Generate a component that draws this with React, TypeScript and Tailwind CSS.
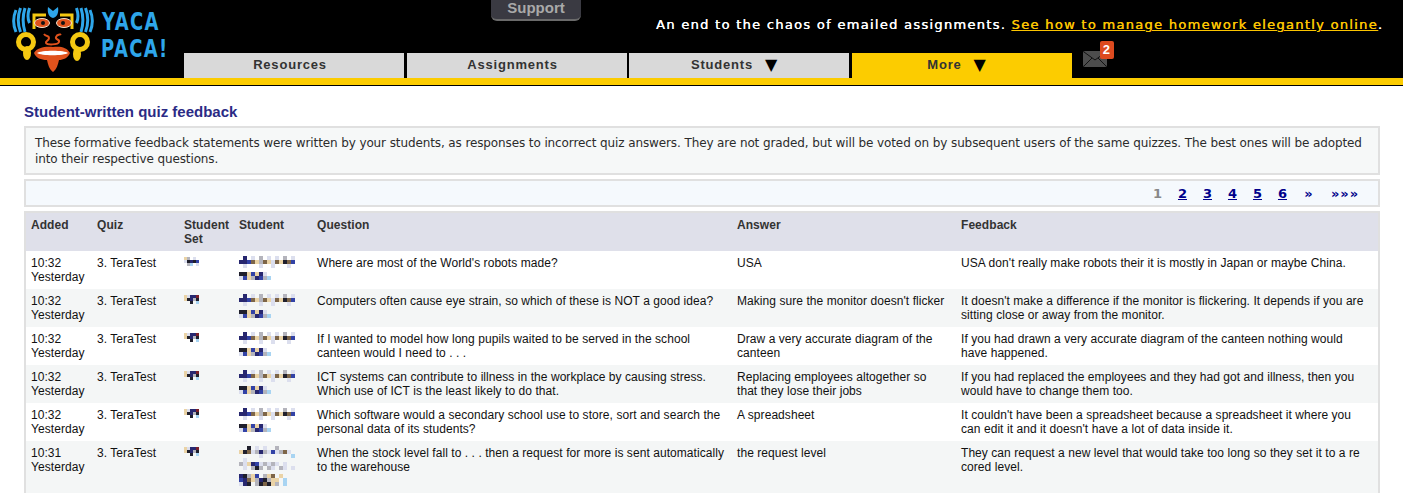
import React from 'react';

const COLORS: Record<string, string> = {
  n: '#27276f',
  d: '#1f1f2c',
  b: '#3242a6',
  t: '#ead3a6',
  g: '#b4b4bc',
  l: '#dcdfee',
  s: '#a8d4f2',
  w: '#7d6548',
  r: '#7a1f2a',
};

const SET_A = ['tg.l.', 'ldndb', '.gs.l'];
const SET_B = ['tlnnr', 'tdngd', '..d.s'];

const NAME_A = [
  '.n.l.g.l.l.g.l',
  'nnbwtgwtlwtdwb',
  '.l...l..l...l.',
  '..............',
  'ddtbtnl.......',
  'lbtgnbgs......',
];
const NAME_B = [
  '..d.l.l..g....',
  'tdwlgnglblgwl.',
  '.....l.......s',
  '.l............',
  'gltnblglgl.l..',
  '.l.gdg.gl.gl.l',
  '..............',
  'ndgtb.gtw.t...',
  'bnwtgndgtt.s..',
  'lnd.gdwdtg.s..',
];

const ROWS = [
  {
    time: '10:32',
    set: SET_A,
    name: NAME_A,
    question: "Where are most of the World's robots made?",
    answer: 'USA',
    feedback: "USA don't really make robots their it is mostly in Japan or maybe China.",
  },
  {
    time: '10:32',
    set: SET_B,
    name: NAME_A,
    question: 'Computers often cause eye strain, so which of these is NOT a good idea?',
    answer: "Making sure the monitor doesn't flicker",
    feedback: "It doesn't make a difference if the monitor is flickering. It depends if you are sitting close or away from the monitor.",
  },
  {
    time: '10:32',
    set: SET_B,
    name: NAME_A,
    question: 'If I wanted to model how long pupils waited to be served in the school canteen would I need to . . .',
    answer: 'Draw a very accurate diagram of the canteen',
    feedback: 'If you had drawn a very accurate diagram of the canteen nothing would have happened.',
  },
  {
    time: '10:32',
    set: SET_B,
    name: NAME_A,
    question: 'ICT systems can contribute to illness in the workplace by causing stress. Which use of ICT is the least likely to do that.',
    answer: 'Replacing employees altogether so that they lose their jobs',
    feedback: 'If you had replaced the employees and they had got and illness, then you would have to change them too.',
  },
  {
    time: '10:32',
    set: SET_B,
    name: NAME_A,
    question: 'Which software would a secondary school use to store, sort and search the personal data of its students?',
    answer: 'A spreadsheet',
    feedback: "It couldn't have been a spreadsheet because a spreadsheet it where you can edit it and it doesn't have a lot of data inside it.",
  },
  {
    time: '10:31',
    set: SET_B,
    name: NAME_B,
    question: 'When the stock level fall to . . . then a request for more is sent automatically to the warehouse',
    answer: 'the request level',
    feedback: 'They can request a new level that would take too long so they set it to a re cored level.',
  },
];

const TABS = [
  { label: 'Resources' },
  { label: 'Assignments' },
  { label: 'Students', arrow: true },
  { label: 'More', arrow: true, active: true },
];

// blurred names in the screenshot, drawn as blocks
const Mosaic = ({ rows, cell = 4 }: { rows: string[]; cell?: number }) => (
  <svg width={rows[0].length * cell} height={rows.length * cell} className="block" shapeRendering="crispEdges">
    {rows.map((row, y) =>
      row.split('').map((c, x) =>
        COLORS[c] ? <rect key={`${x}-${y}`} x={x * cell} y={y * cell} width={cell} height={cell} fill={COLORS[c]} /> : null
      )
    )}
  </svg>
);

const Logo = () => (
  <svg width="184" height="78" viewBox="0 0 184 78" className="block">
    <g fill="none" stroke="#2ea6ea" strokeWidth="3">
      <path d="M16 10c-3 7-3 15 0 22M20.500 8c-3 8-3 16 0 24M25 8c-2.500 8-2.500 16 0 24M29.500 8c-2 6-2 11 0 15" />
      <path d="M90 10c3 7 3 15 0 22M85.500 8c3 8 3 16 0 24M81 8c2.500 8 2.500 16 0 24M76.500 8c2 6 2 11 0 15" />
    </g>
    <path d="M48 7l5 4 5-4c1 6-1 10-5 11-4-1-6-5-5-11z" fill="#2ea6ea" />
    <g fill="none" stroke="#f5c911" strokeWidth="3">
      <path d="M34 29v-14h12M72 29v-14h-12" />
      <circle cx="26" cy="42" r="7.5" strokeWidth="5" />
      <circle cx="80" cy="42" r="7.5" strokeWidth="5" />
    </g>
    <ellipse cx="27" cy="53" rx="4" ry="7" fill="#f5c911" />
    <ellipse cx="77" cy="54" rx="4" ry="7" fill="#f5c911" />
    <ellipse cx="42" cy="23" rx="7.5" ry="4.5" fill="#e0521c" stroke="#f3e5d0" strokeWidth="1" />
    <ellipse cx="64" cy="23" rx="7.5" ry="4.5" fill="#e0521c" stroke="#f3e5d0" strokeWidth="1" />
    <circle cx="43" cy="23" r="2" fill="#111" />
    <circle cx="63" cy="23" r="2" fill="#111" />
    <path d="M44 34c2 3 5 1 5 4s-4 3-3 5 12 2 13-1-4-2-3-5 4-2 5-3" fill="none" stroke="#e0521c" strokeWidth="2" />
    <path d="M34 53c3-6 13-7 19-6 7-1 14 0 17 6-2 5-7 7-11 7-1 4-2 9-6 12-4-3-5-8-6-12-6 0-11-2-13-7z" fill="#e0521c" />
    <path d="M37 53c4-3 28-3 31 0-4 3-27 3-31 0z" fill="#fff" />
    <g fill="#2ea6ea" fontFamily="'DejaVu Sans', sans-serif" fontWeight="700" fontSize="20" letterSpacing="1.5">
      <text transform="translate(102 30) scale(0.9 1.25)">YACA</text>
      <text transform="translate(101 57) scale(0.9 1.25)">PACA!</text>
    </g>
  </svg>
);

const MailBadge = () => (
  <div className="relative ml-[8.5px] mt-[-2px] h-[25px] w-[30px]">
    <svg width="24" height="16" viewBox="0 0 24 16" className="absolute left-0 top-[0px]">
      <rect width="24" height="16" rx="2" fill="#4d4d4d" />
      <path d="M1 1l11 8 11-8M1 15l8-8M23 15l-8-8" fill="none" stroke="#111" strokeWidth="1" />
    </svg>
    <div className="absolute left-[17px] top-[-10px] flex h-[18px] w-[14px] items-center justify-center rounded-[2px] bg-[#dc4a1f] font-['Liberation_Sans',sans-serif] text-[13px] font-bold text-white">
      2
    </div>
  </div>
);

const App = () => {
  return (
    <div className="h-[494px] w-[1403px] overflow-hidden bg-white font-['Liberation_Sans',sans-serif] text-[12px] leading-[14px] tracking-[0.06px] text-[#111]">
      <header className="border-b border-black">
        <div className="flex h-[78px] bg-black">
          <div className="w-[184px]">
            <Logo />
          </div>
          <div className="flex flex-1 flex-col">
            <div className="flex h-[53px] items-start">
              <div className="ml-[307px] flex h-[21px] w-[90px] items-center justify-center rounded-b-[6px] border-b-2 border-[#6a6a6a] bg-[#3a3a42] pb-[3px] text-[15px] font-bold tracking-normal text-[#a9a9a9]">
                Support
              </div>
              <p className="ml-[75px] mt-[17px] whitespace-nowrap font-['DejaVu_Sans',sans-serif] text-[13px] leading-[16px] tracking-[1.3px] text-white [text-shadow:0.35px_0_0_currentColor]">
                An end to the chaos of emailed assignments.{' '}
                <a className="text-[#fcc500] underline">See how to manage homework elegantly online</a>.
              </p>
            </div>
            <nav className="flex h-[25px] gap-[2.5px]">
              {TABS.map((tab) => (
                <div
                  key={tab.label}
                  className={`flex w-[220px] items-center justify-center gap-[12px] pb-[2px] text-[13px] font-bold tracking-[0.8px] text-[#333] ${
                    tab.active ? 'bg-[#fccc00]' : 'bg-[#d9d9d9]'
                  } ${tab.arrow ? 'pr-[9px]' : 'pr-[8px]'}`}
                >
                  <span>{tab.label}</span>
                  {tab.arrow && <span className="font-['DejaVu_Sans',sans-serif] text-[16px] leading-none text-black">▼</span>}
                </div>
              ))}
              <MailBadge />
            </nav>
          </div>
        </div>
        <div className="h-[7px] bg-[#fccc00]" />
      </header>

      <main className="pl-[24px] pr-[23px]">
        <h1 className="mb-[6px] mt-[18px] text-[15px] font-bold leading-[16px] tracking-normal text-[#2b2b85]">Student-written quiz feedback</h1>

        <div className="border-2 border-[#e0e0e0] bg-[#f6f8f8] px-[9px] pb-[6px] pt-[7px] font-['DejaVu_Sans',sans-serif] text-[12px] leading-[16px] tracking-[-0.11px] text-[#2c2c2c]">
          These formative feedback statements were written by your students, as responses to incorrect quiz answers. They are not graded, but will be voted on by subsequent users of the same quizzes. The best ones will be adopted into their respective questions.
        </div>

        <div className="mt-[4px] flex h-[28px] items-center justify-end border-2 border-[#e0e0e0] bg-[#f5f9fd] pr-[18px] pt-[2px] font-['DejaVu_Sans',sans-serif] text-[13px] font-bold tracking-normal text-[#00008b]">
          <span className="w-[25px] text-center text-[#888]">1</span>
          {['2', '3', '4', '5', '6'].map((n) => (
            <a key={n} className="w-[25px] text-center underline">
              {n}
            </a>
          ))}
          <a className="w-[27px] text-center">»</a>
          <a className="ml-[8px] w-[30px] text-center tracking-[1px]">»»»</a>
        </div>

        <div className="mt-[4px] border-x-2 border-t-2 border-[#e0e0e0]">
          <table className="w-full table-fixed border-collapse text-left">
            <colgroup>
              <col className="w-[66px]" />
              <col className="w-[87px]" />
              <col className="w-[55px]" />
              <col className="w-[78px]" />
              <col className="w-[420px]" />
              <col className="w-[224px]" />
              <col />
            </colgroup>
            <thead>
              <tr className="bg-[#dfe0ea] align-top text-[#333]">
                {['Added', 'Quiz', 'Student Set', 'Student', 'Question', 'Answer', 'Feedback'].map((h, i) => (
                  <th key={h} className={`h-[38px] pb-[5px] pl-[5px] pt-[5px] font-bold ${i === 2 ? 'pr-[8px]' : 'pr-[10px]'}`}>
                    {h}
                  </th>
                ))}
              </tr>
            </thead>
            <tbody>
              {ROWS.map((row, i) => (
                <tr key={i} className={`align-top ${i % 2 === 1 ? 'bg-[#f4f6f6]' : 'bg-white'} ${i === 5 ? 'h-[52px]' : 'h-[38px]'}`}>
                  <td className="py-[5px] pl-[5px]">
                    {row.time}
                    <br />
                    Yesterday
                  </td>
                  <td className="py-[5px] pl-[5px]">3. TeraTest</td>
                  <td className="py-[5px] pl-[5px] pt-[6px]">
                    <Mosaic rows={row.set} cell={3} />
                  </td>
                  <td className="py-[5px] pl-[5px]">
                    <Mosaic rows={row.name} cell={4} />
                  </td>
                  <td className="py-[5px] pl-[5px] pr-[4px]">{row.question}</td>
                  <td className="py-[5px] pl-[5px] pr-[10px]">{row.answer}</td>
                  <td className="py-[5px] pl-[5px] pr-[14px]">{row.feedback}</td>
                </tr>
              ))}
            </tbody>
          </table>
        </div>
      </main>
    </div>
  );
};

export default App;
